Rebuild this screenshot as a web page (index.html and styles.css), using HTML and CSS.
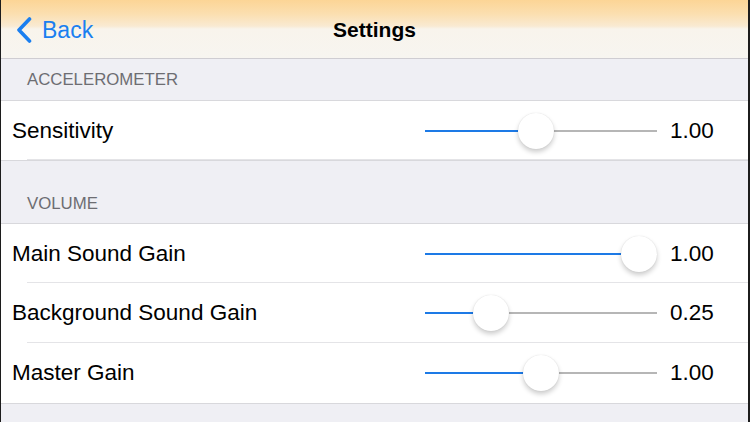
FILE: index.html
```html
<!DOCTYPE html>
<html>
<head>
<meta charset="utf-8">
<link rel="stylesheet" href="styles.css">
</head>
<body>
<div class="screen">
  <header class="nav">
    <div class="back">
      <svg class="chev" width="16" height="26" viewBox="0 0 16 26"><path d="M13.5 2 L3 13 L13.5 24" fill="none" stroke="#1a7ff0" stroke-width="3.6" stroke-linecap="round" stroke-linejoin="round"/></svg>
      <span class="back-text">Back</span>
    </div>
    <div class="title">Settings</div>
  </header>

  <div class="section-head first">ACCELEROMETER</div>
  <div class="group">
    <div class="row">
      <div class="label">Sensitivity</div>
      <div class="slider"><div class="fill" style="width:100px"></div><div class="thumb" style="left:93px"></div></div>
      <div class="value">1.00</div>
    </div>
  </div>

  <div class="section-head second">VOLUME</div>
  <div class="group">
    <div class="row">
      <div class="label">Main Sound Gain</div>
      <div class="slider"><div class="fill" style="width:205px"></div><div class="thumb" style="left:196px"></div></div>
      <div class="value">1.00</div>
    </div>
    <div class="row">
      <div class="label">Background Sound Gain</div>
      <div class="slider"><div class="fill" style="width:55px"></div><div class="thumb" style="left:48px"></div></div>
      <div class="value">0.25</div>
    </div>
    <div class="row last">
      <div class="label">Master Gain</div>
      <div class="slider"><div class="fill" style="width:105px"></div><div class="thumb" style="left:98px"></div></div>
      <div class="value">1.00</div>
    </div>
  </div>
  <div class="rest"></div>
</div>
</body>
</html>
```

FILE: styles.css
```css
html, body {
  margin: 0;
  padding: 0;
}
body {
  width: 750px;
  height: 422px;
  overflow: hidden;
  font-family: "Liberation Sans", Arial, sans-serif;
  background: #efeff4;
}
.screen {
  width: 750px;
  height: 422px;
  box-sizing: border-box;
  border-left: 1px solid #1c1c1c;
  border-right: 2px solid #1c1c1c;
  background: #efeff4;
  display: flex;
  flex-direction: column;
}
.nav {
  height: 58px;
  flex: none;
  border-bottom: 1px solid #cfcdd2;
  background: linear-gradient(to bottom, #fcd596 0px, #fbdfb0 14px, #f9ead2 26px, #f8f4ec 29px, #f7f5f0 58px);
  display: flex;
  align-items: center;
  justify-content: center;
  position: relative;
}
.back {
  position: absolute;
  left: 15px;
  top: 17px;
  display: flex;
  align-items: center;
  gap: 10px;
}
.chev {
  display: block;
}
.back-text {
  color: #1a7ff0;
  font-size: 23px;
  line-height: 26px;
}
.title {
  font-size: 21px;
  font-weight: bold;
  color: #000;
  margin-top: 2px;
}
.section-head {
  color: #6d6d72;
  font-size: 16.8px;
  padding-left: 26px;
  box-sizing: border-box;
  display: flex;
  align-items: flex-end;
  border-bottom: 1px solid #d8d8dc;
}
.section-head.first {
  height: 42px;
  padding-bottom: 10px;
}
.section-head.second {
  height: 64px;
  padding-bottom: 9px;
  border-top: 1px solid #d8d8dc;
}
.group {
  background: #fff;
}
.row {
  height: 59px;
  display: flex;
  align-items: center;
  padding-left: 11px;
  position: relative;
}
.row::after {
  content: "";
  position: absolute;
  left: 26px;
  right: 0;
  bottom: 0;
  height: 1px;
  background: #e4e4e7;
}
.row.last::after {
  display: none;
}
.group .row + .row {
  height: 60px;
}
.label {
  flex: 1;
  font-size: 22.5px;
  color: #000;
}
.slider {
  width: 232px;
  height: 2px;
  background: #b6b6b6;
  position: relative;
  margin-right: 13px;
}
.fill {
  position: absolute;
  left: 0;
  top: 0;
  height: 2px;
  background: #1d7ae6;
}
.thumb {
  position: absolute;
  top: -17px;
  width: 36px;
  height: 36px;
  border-radius: 50%;
  background: #fff;
  box-shadow: 0 3px 5px rgba(0, 0, 0, 0.2), 0 0 1px rgba(0, 0, 0, 0.15);
}
.value {
  width: 78px;
  font-size: 22.5px;
  color: #000;
}
.rest {
  flex: 1;
  border-top: 1px solid #d8d8dc;
}
```
